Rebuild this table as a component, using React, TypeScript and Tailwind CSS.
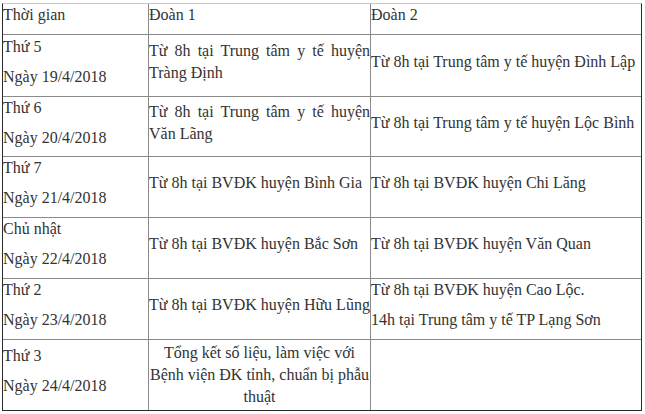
const rows = [
  { day: "Thứ 5", date: "Ngày 19/4/2018", d1: "Từ 8h tại Trung tâm y tế huyện Tràng Định", d2: ["Từ 8h tại Trung tâm y tế huyện Đình Lập"], h: "h-[62px]" },
  { day: "Thứ 6", date: "Ngày 20/4/2018", d1: "Từ 8h tại Trung tâm y tế huyện Văn Lãng", d2: ["Từ 8h tại Trung tâm y tế huyện Lộc Bình"], h: "h-[60px]" },
  { day: "Thứ 7", date: "Ngày 21/4/2018", d1: "Từ 8h tại BVĐK huyện Bình Gia", d2: ["Từ 8h tại BVĐK huyện Chi Lăng"], h: "h-[61px]" },
  { day: "Chủ nhật", date: "Ngày 22/4/2018", d1: "Từ 8h tại BVĐK huyện Bắc Sơn", d2: ["Từ 8h tại BVĐK huyện Văn Quan"], h: "h-[61px]" },
  { day: "Thứ 2", date: "Ngày 23/4/2018", d1: "Từ 8h tại BVĐK huyện Hữu Lũng", d2: ["Từ 8h tại BVĐK huyện Cao Lộc.", "14h tại Trung tâm y tế TP Lạng Sơn"], h: "h-[61px]" },
]

export default function App() {
  return (
    <div className="bg-white w-[645px] h-[414px] pt-[3px] pl-[2px] text-[16px] text-[#333] leading-[22px] [font-family:'Liberation_Serif',serif]">
      <div className="w-[640px] border-t border-t-[#c8c8c8] border-x border-x-[#2a2a2a] border-b border-b-[#2a2a2a]">
        {/* Header */}
        <div className="grid grid-cols-[146px_222px_270px] h-[31px] border-b border-[#8a8a8a]">
          <div className="border-r border-[#8a8a8a]">
            <p className="mb-2">Thời gian</p>
          </div>
          <div className="border-r border-[#8a8a8a]">
            <p className="mb-2">Đoàn 1</p>
          </div>
          <div>
            <p className="mb-2">Đoàn 2</p>
          </div>
        </div>

        {rows.map((r) => (
          <div key={r.date} className={`grid grid-cols-[146px_222px_270px] border-b border-[#8a8a8a] ${r.h}`}>
            <div className="border-r border-[#8a8a8a] flex flex-col justify-center">
              <p className="mb-2">{r.day}</p>
              <p className="mb-2">{r.date}</p>
            </div>
            <div className="border-r border-[#8a8a8a] flex flex-col justify-center">
              <p className="mb-2 text-justify [text-align-last:left]">{r.d1}</p>
            </div>
            <div className="flex flex-col justify-center">
              {r.d2.map((t) => (
                <p key={t} className="mb-2">{t}</p>
              ))}
            </div>
          </div>
        ))}

        {/* Last row */}
        <div className="grid grid-cols-[146px_222px_270px] h-[70px]">
          <div className="border-r border-[#8a8a8a] flex flex-col justify-center">
            <p className="mb-2">Thứ 3</p>
            <p className="mb-2">Ngày 24/4/2018</p>
          </div>
          <div className="border-r border-[#8a8a8a] flex flex-col justify-center">
            <p className="text-center">Tổng kết số liệu, làm việc với Bệnh viện ĐK tỉnh, chuẩn bị phẫu thuật</p>
          </div>
          <div />
        </div>
      </div>
    </div>
  )
}
